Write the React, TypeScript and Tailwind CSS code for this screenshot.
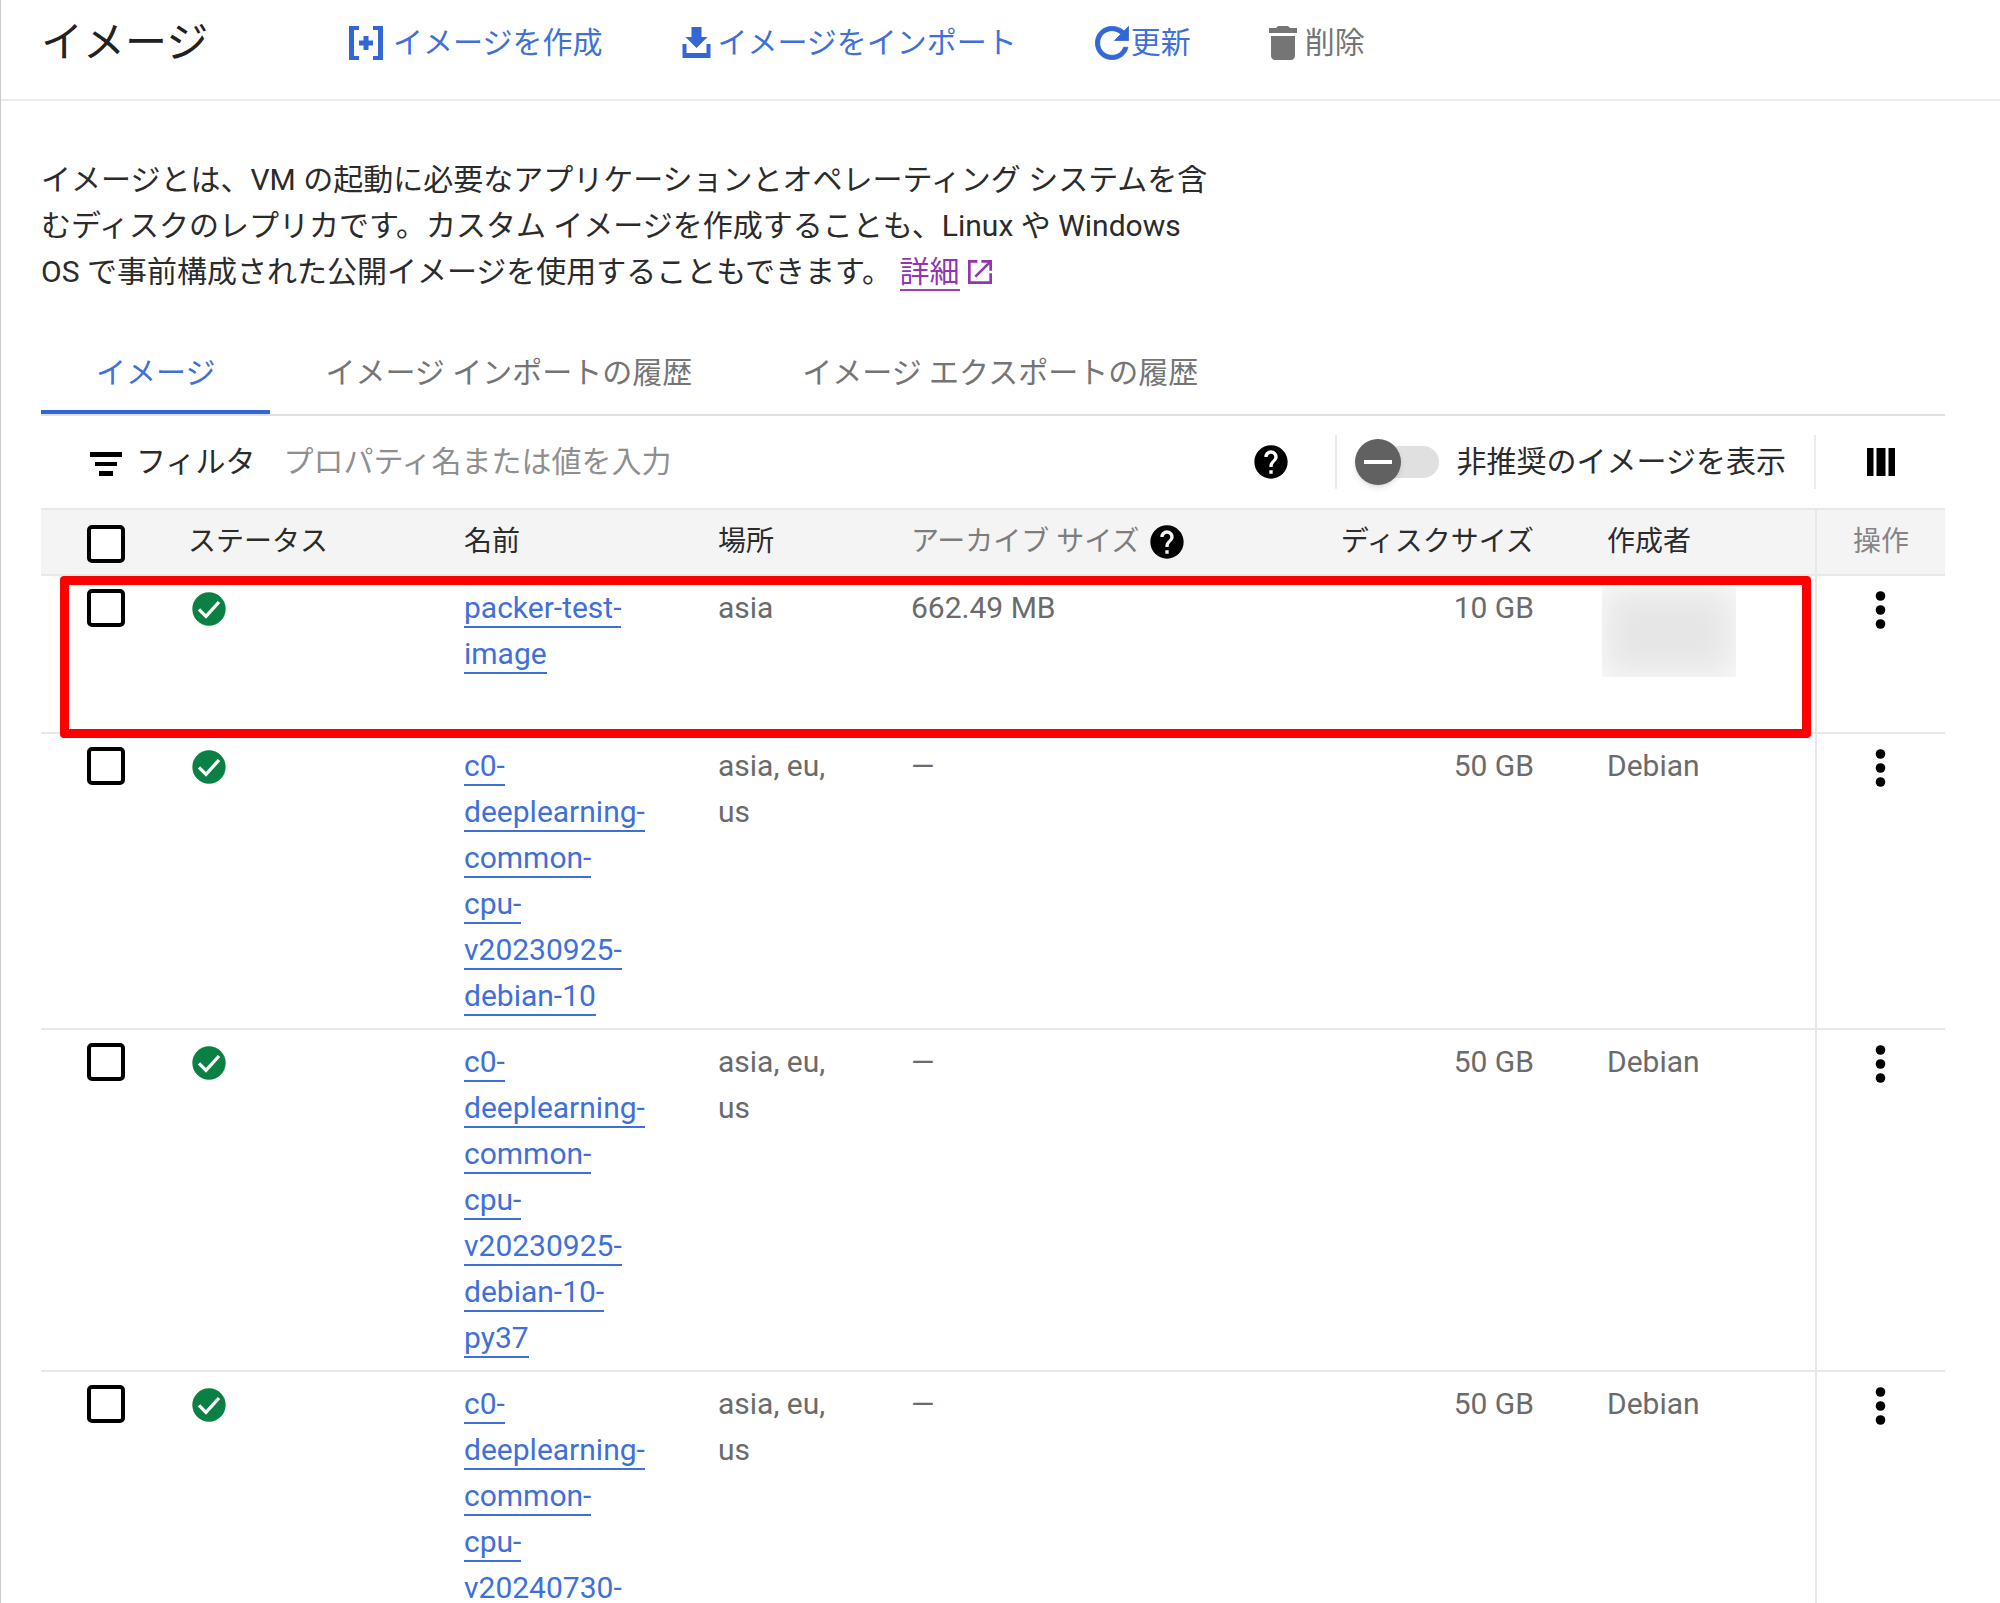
import React, { useState } from 'react';

interface ImageRow {
  name: string;
  location: string;
  archiveSize: string;
  diskSize: string;
  creator?: string;
  highlighted?: boolean;
}

const images: ImageRow[] = [
  { name: 'packer-test-image', location: 'asia', archiveSize: '662.49 MB', diskSize: '10 GB', highlighted: true },
  { name: 'c0-deeplearning-common-cpu-v20230925-debian-10', location: 'asia, eu, us', archiveSize: '—', diskSize: '50 GB', creator: 'Debian' },
  { name: 'c0-deeplearning-common-cpu-v20230925-debian-10-py37', location: 'asia, eu, us', archiveSize: '—', diskSize: '50 GB', creator: 'Debian' },
  { name: 'c0-deeplearning-common-cpu-v20240730-', location: 'asia, eu, us', archiveSize: '—', diskSize: '50 GB', creator: 'Debian' }
];

const tabs = ['イメージ', 'イメージ インポートの履歴', 'イメージ エクスポートの履歴'];

const HelpIcon: React.FC = () => (
  <svg viewBox="0 0 24 24" className="size-10 shrink-0" fill="currentColor">
    <path d="M12 2C6.48 2 2 6.48 2 12s4.48 10 10 10 10-4.480 10-10S17.520 2 12 2zm1 17h-2v-2h2v2zm2.070-7.750l-.9.920C13.450 12.900 13 13.500 13 15h-2v-.5c0-1.100.45-2.100 1.170-2.830l1.240-1.260c.37-.36.59-.86.59-1.410 0-1.100-.9-2-2-2s-2 .9-2 2H8c0-2.210 1.790-4 4-4s4 1.790 4 4c0 .88-.36 1.680-.93 2.250z" />
  </svg>
);

const CreateIcon: React.FC = () => (
  <svg viewBox="0 0 34 34" className="size-[34px] text-[#3367d6]" fill="currentColor">
    <path d="M0 0h10v4H5v26h5v4H0zM34 0H24v4h5v26h-5v4h10zM14.500 10h5v4.500H24v5h-4.500V24h-5v-4.500H10v-5h4.500z" />
  </svg>
);

const ImportIcon: React.FC = () => (
  <svg viewBox="0 0 28 31" className="h-[31px] w-[29px] text-[#3367d6]" fill="currentColor">
    <path d="M9 0h10v10h6L14 21 3 10h6zM0 17h4v9h20v-9h4v14H0z" />
  </svg>
);

const RefreshIcon: React.FC = () => (
  <svg viewBox="4 4 16 16" className="size-[34px] text-[#3367d6]" fill="currentColor" stroke="currentColor" strokeWidth=".4">
    <path d="M17.650 6.350C16.200 4.900 14.210 4.200 12 4.200c-4.420 0-7.790 3.380-7.790 7.800s3.370 7.800 7.790 7.800c3.730 0 6.640-2.350 7.530-5.800h-2.080c-.82 2.330-2.840 3.800-5.450 3.800-3.310 0-5.800-2.490-5.800-5.800s2.490-5.800 5.800-5.800c1.660 0 3.040.59 4.120 1.680L13.200 10.800h6.600V4.200l-2.150 2.150z" />
  </svg>
);

const DeleteIcon: React.FC = () => (
  <svg viewBox="0 0 28 34" className="h-[34px] w-7" fill="currentColor">
    <path d="M2 10h24v20c0 2.200-1.800 4-4 4H6c-2.200 0-4-1.800-4-4zM9 0h10l2 2h7v5H0V2h7z" />
  </svg>
);

const StatusIcon: React.FC = () => (
  <svg viewBox="0 0 24 24" className="size-10" role="img" aria-label="OK">
    <circle cx="12" cy="12" r="10" fill="#0b8043" />
    <path d="M6 12.200l4.200 4.200L18 7.800" fill="none" stroke="#fff" strokeWidth="2" />
  </svg>
);

const Checkbox: React.FC<{ label: string }> = ({ label }) => (
  <input
    type="checkbox"
    aria-label={label}
    className="block size-[38px] appearance-none rounded-[5px] border-4 border-black bg-white checked:bg-[#3367d6]"
  />
);

const ImagesPage: React.FC = () => {
  const [activeTab, setActiveTab] = useState(tabs[0]);
  const [filter, setFilter] = useState('');

  return (
    <div className="h-screen overflow-hidden border-l border-[#cccccc] bg-white font-['Roboto','Noto_Sans_CJK_JP',sans-serif] text-[30px] leading-[46px] text-[#2b2b2b]">
      <header className="flex h-[101px] items-center border-b-2 border-[#ebebeb] pb-3.5 pl-10">
        <h1 className="w-[308px] text-[42px] text-[#212121]">イメージ</h1>
        <div className="flex items-center text-[#3f70da]">
          <button type="button" className="mr-20 flex items-center gap-2.5"><CreateIcon />イメージを作成</button>
          <button type="button" className="mr-[78px] flex items-center gap-1.5"><ImportIcon />イメージをインポート</button>
          <button type="button" className="mr-[78px] flex items-center gap-0.5"><RefreshIcon />更新</button>
          <button type="button" disabled className="flex items-center gap-2 text-[#757575]"><DeleteIcon />削除</button>
        </div>
      </header>

      <main className="pl-10 pr-[55px] pt-14">
        <p className="max-w-[1180px]">
          イメージとは、VM の起動に必要なアプリケーションとオペレーティング システムを含むディスクのレプリカです。カスタム イメージを作成することも、Linux や Windows OS で事前構成された公開イメージを使用することもできます。{' '}
          <a href="#details" className="border-b-2 border-[#9a3fb5] text-[#9334b0]">詳細</a>
          <svg viewBox="3 3 18 18" className="ml-2 inline-block size-6 align-[-2px] text-[#9334b0]" fill="currentColor">
            <path d="M19 19H5V5h5V3H3v18h18v-8h-2v6zM13 3v2h4.600l-9.800 9.800 1.400 1.400L19 6.400V11h2V3h-8z" />
          </svg>
        </p>

        <nav role="tablist" className="mt-9 flex border-b-2 border-[#e0e0e0]">
          {tabs.map(tab => (
            <button
              key={tab}
              type="button"
              role="tab"
              aria-selected={tab === activeTab}
              onClick={() => setActiveTab(tab)}
              className={
                tab === activeTab
                  ? 'h-[83px] border-b-4 border-[#3367d6] px-[55px] pt-1 text-[#3f70da]'
                  : 'h-[83px] border-b-4 border-transparent px-[55px] pt-1 text-[#757575]'
              }
            >
              {tab}
            </button>
          ))}
        </nav>

        <div className="flex h-[92px] items-center">
          <label htmlFor="filter" className="flex items-center gap-3.5 pl-[49px]">
            <svg viewBox="0 0 32 24" className="mt-1 h-6 w-8" fill="#000">
              <path d="M0 0h32v5H0zM5 10h22v4H5zM9 19h14v5H9z" />
            </svg>
            フィルタ
          </label>
          <input
            id="filter"
            value={filter}
            onChange={e => setFilter(e.target.value)}
            placeholder="プロパティ名または値を入力"
            className="ml-7 min-w-0 flex-1 outline-none placeholder:text-[#8f8f8f]"
          />
          <button type="button" aria-label="ヘルプ" className="mr-11 text-black"><HelpIcon /></button>
          <div className="h-[54px] w-0.5 bg-[#ebebeb]" />
          <label className="ml-[18px] mr-7 flex items-center gap-[18px]">
            <span className="relative flex h-12 w-[84px] items-center">
              <input type="checkbox" role="switch" className="ml-2 h-8 w-[76px] appearance-none rounded-full bg-[#e0e0e0]" />
              <span className="absolute left-0 flex size-[46px] items-center justify-center rounded-full bg-[#616161] shadow-md">
                <span className="h-1 w-7 bg-white" />
              </span>
            </span>
            非推奨のイメージを表示
          </label>
          <div className="h-[54px] w-0.5 bg-[#ebebeb]" />
          <button type="button" aria-label="列の表示" className="flex w-[129px] justify-center">
            <svg viewBox="0 0 28 28" className="size-7" fill="#000">
              <path d="M0 0h6.500v28H0zM9.500 0h9v28h-9zM21.500 0H28v28h-6.500z" />
            </svg>
          </button>
        </div>

        <table className="w-full table-fixed border-separate border-spacing-0 text-left text-[#6b6b6b]">
          <thead className="text-[28px] text-[#2b2b2b]">
            <tr className="h-[68px] bg-[#f4f4f4] *:border-y-2 *:border-[#e8e8e8] *:p-0 *:font-normal">
              <th className="w-[119px]"><div className="pl-[46px] pt-1"><Checkbox label="すべて選択" /></div></th>
              <th className="w-[275px]"><div className="pl-7">ステータス</div></th>
              <th className="w-[254px]"><div className="pl-[29px]">名前</div></th>
              <th className="w-[193px]"><div className="pl-[29px]">場所</div></th>
              <th className="text-[#7d7d7d]"><div className="flex items-center gap-2 pl-[29px]">アーカイブ サイズ <span className="text-black"><HelpIcon /></span></div></th>
              <th className="w-[260px] text-right"><div className="pr-9">ディスクサイズ</div></th>
              <th className="w-[245px]"><div className="pl-[37px]">作成者</div></th>
              <th className="w-[130px] border-l-2 text-center text-[#858585]">操作</th>
            </tr>
          </thead>
          <tbody>
            {images.map(image => (
              <tr key={image.name} className="relative align-top *:border-b-2 *:border-[#e8e8e8] *:py-[9px]">
                <td className="pl-[46px]"><div className="pt-1"><Checkbox label={image.name} /></div></td>
                <td className="pl-[29px]"><div className="pt-1"><StatusIcon /></div></td>
                <td className="pl-[29px] pr-[43px]">
                  <a href={`#${image.name}`} className="border-b-2 border-[#3f70da] pb-px text-[#3f70da]">{image.name}</a>
                </td>
                <td className="pl-[29px] pr-[29px]">{image.location}</td>
                <td className="pl-[29px]">{image.archiveSize}</td>
                <td className="pr-9 text-right">{image.diskSize}</td>
                <td className={image.creator ? 'pl-[37px]' : 'pl-8'}>
                  {image.creator || (
                    <div className="h-[138px] pt-0.5">
                      <div className="h-[90px] w-[134px] bg-[#e6e6e6] shadow-[inset_0_0_36px_#fcfcfc]" />
                    </div>
                  )}
                </td>
                <td className="border-l-2">
                  <button type="button" aria-label="その他の操作" className="mx-auto block">
                    <svg viewBox="0 0 12 48" className="h-12 w-3" fill="#000">
                      <circle cx="5.500" cy="11" r="4.800" />
                      <circle cx="5.500" cy="25" r="4.800" />
                      <circle cx="5.500" cy="39" r="4.800" />
                    </svg>
                  </button>
                  {image.highlighted && (
                    <div className="pointer-events-none absolute -bottom-1 left-[19px] right-[134px] top-0 rounded border-[9px] border-[#ff0000]" />
                  )}
                </td>
              </tr>
            ))}
          </tbody>
        </table>
      </main>
    </div>
  );
};

export default ImagesPage;
